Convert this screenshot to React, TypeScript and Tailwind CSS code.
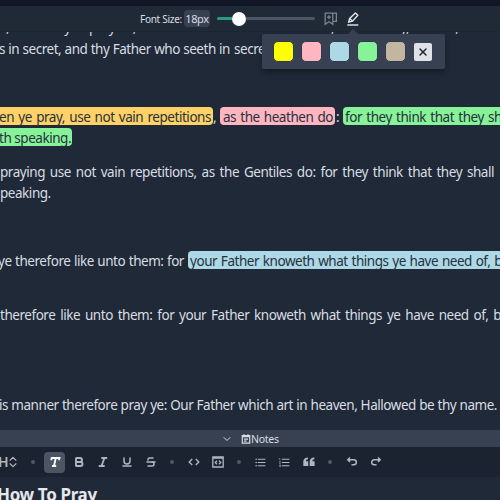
import type { ReactNode } from 'react';
import { Bold, Italic, Underline, Strikethrough, ChevronDown, ChevronsUpDown, X } from 'lucide-react';
import { MdFormatListBulleted, MdFormatListNumbered } from 'react-icons/md';

function Run({ className = '', children }: { className?: string; children: ReactNode }) {
  return (
    <span className={`block shrink-0 whitespace-nowrap [text-align-last:justify] ${className}`}>{children}</span>
  );
}

function Line({ className = '', children }: { className?: string; children: ReactNode }) {
  return <p className={`flex h-[21px] shrink-0 items-start ${className}`}>{children}</p>;
}

function Mark({ className = '', children }: { className?: string; children: ReactNode }) {
  return <mark className={`flex h-[18px] shrink-0 items-start text-[#27313d] ${className}`}>{children}</mark>;
}

function BookmarkPlus() {
  return (
    <svg width="14" height="14" viewBox="0 0 14 14" fill="none" stroke="#7b8490" strokeWidth="1.3">
      <path d="M1.2 1.2h7.6v11L5 9.8l-3.8 2.4zM5 3.2v4M3 5.2h4M8.8 1.2h3.6v8.2H9" />
    </svg>
  );
}

function MarkPen() {
  return (
    <svg width="14" height="14" viewBox="0 0 14 14" fill="none" stroke="#e5e7eb" strokeWidth="1.4" strokeLinejoin="round">
      <path d="M3.6 6.6 9.4 1l2.4 2.2-5.3 5.9-3.9 1.1zM3.7 6.6l2.8 2.5" />
      <path d="M1.3 13h11" />
    </svg>
  );
}

function Cell({ active = false, children }: { active?: boolean; children: ReactNode }) {
  return (
    <div className="flex w-6 shrink-0 justify-center">
      <button className={`flex h-[21px] w-[21px] items-center justify-center rounded ${active ? 'bg-[#4b5563] text-white' : ''}`}>
        {children}
      </button>
    </div>
  );
}

function Dot() {
  return (
    <div className="flex w-[19px] shrink-0 justify-center">
      <i className="h-1 w-1 rounded-full bg-[#4f5967]" />
    </div>
  );
}

const swatches = ['bg-[#ffff00]', 'bg-[#ffb6c1]', 'bg-[#add8e6]', 'bg-[#86f398]', 'bg-[#c3b6a0]'];

export default function App() {
  return (
    <div className="relative flex h-[500px] w-[500px] flex-col overflow-hidden bg-[#1f2937] font-['Noto_Sans',sans-serif] text-[#d9dde3]">
      <div className="h-[6px] shrink-0 bg-[#101626]" />
      <header className="flex h-[26px] shrink-0 items-center border-b border-[#1b2431] bg-[#202a37] pl-[140px]">
        <span className="w-[44px] whitespace-nowrap pt-px text-[10px] tracking-[-0.28px]">Font Size:</span>
        <span className="flex h-[17px] w-[26px] items-center justify-center rounded bg-[#374151] pt-px text-[11px] tracking-[-0.4px]">18px</span>
        <div className="ml-[7px] flex w-[98px] items-center">
          <div className="h-[3px] w-[15px] rounded-l bg-[#2b9a80]" />
          <div className="h-[14px] w-[14px] rounded-full bg-white" />
          <div className="h-[3px] flex-1 rounded-r bg-[#4b5563]" />
        </div>
        <div className="ml-[9px]"><BookmarkPlus /></div>
        <div className="ml-[8px]"><MarkPen /></div>
      </header>

      <main className="flex h-[398px] shrink-0 flex-col overflow-hidden text-[13.5px] leading-[21px] tracking-[-0.46px]">
        <Line className="-mt-[15px]">
          <Run className="-ml-[22px] w-[158px]">thou, when ye prayest,</Run>
          <span className="ml-[195px] shrink-0">,</span>
          <span className="ml-[66px] shrink-0">y,</span>
          <span className="ml-[46px] shrink-0">,</span>
        </Line>
        <Line className="mt-px">
          <Run className="-ml-px w-[231px]">s in secret, and thy Father who seeth in</Run>
          <span className="ml-[4px]">secret</span>
        </Line>
        <Line className="mt-[47px]">
          <Mark className="w-[213px] rounded-r-[4px] bg-[#ffd166]">
            <Run className="-ml-px w-[212px]">en ye pray, use not vain repetitions</Run>
          </Mark>
          <span className="w-[7px] shrink-0">,</span>
          <Mark className="w-[115px] rounded-[4px] bg-[#ffb6c1] pl-[3px]">
            <Run className="w-[110px]">as the heathen do</Run>
          </Mark>
          <span className="w-[8px] shrink-0 pl-px">:</span>
          <Mark className="w-[160px] rounded-l-[4px] bg-[#86f398] pl-[2px]">
            <Run className="w-[157px]">for they think that they sh</Run>
          </Mark>
        </Line>
        <Line>
          <Mark className="w-[72px] rounded-r-[4px] bg-[#86f398]">
            <Run className="-ml-px w-[71px]">th speaking.</Run>
          </Mark>
        </Line>
        <Line className="mt-[13px]">
          <Run className="w-[494px]">praying use not vain repetitions, as the Gentiles do: for they think that they shall</Run>
        </Line>
        <Line><Run className="w-[49px]">peaking.</Run></Line>
        <Line className="mt-[47px]">
          <Run className="-ml-[2px] w-[186px]">ye therefore like unto them: for</Run>
          <Mark className="ml-[4px] w-[320px] rounded-l-[4px] bg-[#add8e6] pl-[2px]">
            <Run className="w-[312px]">your Father knoweth what things ye have need of, b</Run>
          </Mark>
        </Line>
        <Line className="mt-[33px]">
          <Run className="w-[501px]">therefore like unto them: for your Father knoweth what things ye have need of, b</Run>
        </Line>
        <Line className="mt-[69px]">
          <Run className="-ml-px w-[498px]">is manner therefore pray ye: Our Father which art in heaven, Hallowed be thy name.</Run>
        </Line>
      </main>

      <div className="flex h-[17px] shrink-0 items-center bg-[#374151] pl-[221px] pt-px">
        <ChevronDown size={12} strokeWidth={2} />
        <svg className="ml-[8px]" width="10" height="10" viewBox="0 0 10 10" fill="none" stroke="currentColor" strokeWidth="1.2">
          <path d="M1.3 1.7h7.4v7.4H1.3zM1.3 2.7h7.4M3 .3v1.5M7 .3v1.5M3 5.2h4M3 7.2h2.5" />
        </svg>
        <span className="whitespace-nowrap pt-px text-[10.5px] tracking-[-0.25px]">Notes</span>
      </div>
      <div className="flex h-[30px] shrink-0 items-center bg-[#1b2330] text-[#b0b6bf]">
        <div className="flex w-[23.5px] shrink-0 items-center">
          <span className="-ml-[2px] w-[9px] text-[14px] font-semibold leading-none">H</span>
          <ChevronsUpDown className="-ml-px shrink-0" size={14} strokeWidth={2} />
        </div>
        <Dot />
        <Cell active>
          <svg width="12" height="12" viewBox="0 0 12 12" fill="none" stroke="currentColor" strokeWidth="1.8">
            <path d="M2.2 4.2 2.7 2h7.8L10 4.2M6.8 2 5 10M3 10h4.2" />
          </svg>
        </Cell>
        <Cell><Bold size={12} strokeWidth={3.8} /></Cell>
        <Cell><Italic size={12} strokeWidth={3.6} /></Cell>
        <Cell><Underline size={12} strokeWidth={3} /></Cell>
        <Cell><Strikethrough size={12} strokeWidth={3} /></Cell>
        <Dot />
        <Cell>
          <svg width="12" height="12" viewBox="0 0 12 12" fill="none" stroke="currentColor" strokeWidth="1.4">
            <path d="M4.2 3 1.2 6l3 3M7.8 3l3 3-3 3" />
          </svg>
        </Cell>
        <Cell>
          <svg width="12" height="12" viewBox="0 0 12 12" fill="none" stroke="currentColor" strokeWidth="1.3">
            <path d="M.8 1h10.4v10H.8zM.8 2h10.4M5 4.7 3.2 6.5 5 8.3M7 4.7l1.8 1.8L7 8.3" />
          </svg>
        </Cell>
        <Dot />
        <Cell><MdFormatListBulleted size={13} /></Cell>
        <Cell><MdFormatListNumbered size={13} /></Cell>
        <Cell>
          <svg width="12" height="10" viewBox="0 0 12 10" fill="currentColor">
            <path d="M5 .4v1.8C3.6 2.3 3 3 2.9 4.2h2.3v4.9H.3V4.8C.3 2 1.8.4 5 .4zM11.4.4v1.8C10 2.3 9.4 3 9.3 4.2h2.3v4.9H6.7V4.8C6.7 2 8.2.4 11.4.4z" />
          </svg>
        </Cell>
        <Dot />
        <Cell>
          <svg width="12" height="12" viewBox="0 0 12 12" fill="none" stroke="currentColor" strokeWidth="1.5">
            <path d="M4 1.5 1.8 3.7 4 5.9M2 3.7h5.8a2.5 2.5 0 0 1 0 5H5.5" />
          </svg>
        </Cell>
        <Cell>
          <svg width="12" height="12" viewBox="0 0 12 12" fill="none" stroke="currentColor" strokeWidth="1.5">
            <path d="M8 1.5l2.2 2.2L8 5.9M10 3.7H4.2a2.5 2.5 0 0 0 0 5h2.3" />
          </svg>
        </Cell>
      </div>
      <h1 className="-ml-[3px] h-[23px] shrink-0 whitespace-nowrap pt-[8px] text-[17px] font-bold leading-[20px] tracking-[-0.35px] text-[#e5e7eb]">How To Pray</h1>

      <div className="absolute left-[262px] top-[34px] flex h-[35px] w-[183px] items-center rounded-[2px] bg-[#374151] pl-[11px] shadow-md shadow-black/30">
        <i className="absolute -top-[5px] left-[86px] h-0 w-0 border-x-[5px] border-b-[5px] border-x-transparent border-b-[#374151]" />
        {swatches.map((color) => (
          <button key={color} className={`mr-[7px] h-[21px] w-[21px] shrink-0 rounded-[5px] border border-[#2d3a50] ${color}`} />
        ))}
        <button className="ml-px flex h-[18px] w-[18px] shrink-0 items-center justify-center rounded-[2px] bg-[#dfe2e7] text-[#1f2937]">
          <X size={12} strokeWidth={3} />
        </button>
      </div>
    </div>
  );
}
